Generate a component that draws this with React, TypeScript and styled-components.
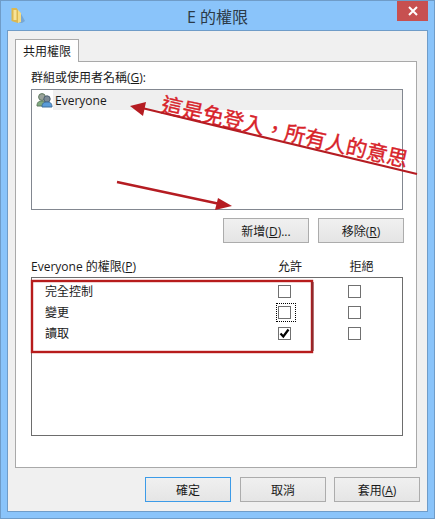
import styled, { createGlobalStyle } from 'styled-components';

const CJK = `"Noto Sans CJK TC", "Noto Sans", sans-serif`;

const Global = createGlobalStyle`
  html, body { margin: 0; padding: 0; background: #8ac4fa; }
  * { box-sizing: border-box; }
`;

const Win = styled.div`
  position: relative;
  width: 435px;
  height: 519px;
  background: #8ac4fa;
  border: 1px solid #6f9cc8;
  font-family: "Open Sans", ${CJK};
  font-size: 12px;
  color: #1a1a1a;
  overflow: hidden;
`;
const TitleBar = styled.div`
  position: relative;
  height: 29px;
  display: flex;
  align-items: center;
  justify-content: center;
  font-size: 16px;
  color: #2b3a47;
`;
const TitleIcon = styled.svg`
  position: absolute;
  left: 10px;
  top: 6px;
`;
const CloseBtn = styled.div`
  position: absolute;
  right: 6px;
  top: 0;
  width: 31px;
  height: 20px;
  background: #c75050;
  display: flex;
  align-items: center;
  justify-content: center;
`;
const Client = styled.div`
  margin: 0 6px;
  width: 421px;
  height: 482px;
  background: #f0f0f0;
  border: 1px solid #6f9cc8;
  padding: 8px 9px 0 7px;
`;
const Tab = styled.div`
  width: 64px;
  height: 23px;
  background: #fff;
  border: 1px solid #a9a9a9;
  border-bottom: none;
  margin-bottom: -1px;
  position: relative;
  z-index: 1;
  display: flex;
  align-items: center;
  justify-content: center;
`;
const Panel = styled.div`
  width: 402px;
  height: 407px;
  background: #fff;
  border: 1px solid #a9a9a9;
  padding: 0 12px 0 15px;
  display: flex;
  flex-direction: column;
`;
const FieldLabel = styled.div`
  height: 27px;
  padding-top: 7px;
  line-height: 18px;
`;
const NameList = styled.div`
  width: 372px;
  height: 121px;
  border: 1px solid #828790;
`;
const NameRow = styled.div`
  height: 20px;
  background: #efefef;
  margin-left: 21px;
  display: flex;
  align-items: center;
  padding-left: 2px;
  position: relative;
`;
const UsersIcon = styled.svg`
  position: absolute;
  left: -17px;
  top: 2px;
`;
const ButtonRow = styled.div`
  display: flex;
  justify-content: flex-end;
  gap: 9px;
  margin-top: 8px;
  height: 25px;
`;
const Btn = styled.div<{ $default?: boolean }>`
  width: 86px;
  height: 25px;
  margin-right: ${(p) => (p.$default ? 1 : 0)}px;
  border: 1px solid ${(p) => (p.$default ? '#3c9be8' : '#acacac')};
  background: linear-gradient(#f0f0f0, #e5e5e5);
  display: flex;
  align-items: center;
  justify-content: center;
`;
const PermHeader = styled.div`
  display: grid;
  grid-template-columns: 229px 60px 83px;
  margin-top: 15px;
  height: 19px;
  line-height: 18px;
`;
const ColHead = styled.div`
  text-align: center;
`;
const PermList = styled.div`
  width: 372px;
  height: 159px;
  border: 1px solid #6d6d6d;
  padding-top: 3px;
`;
const PermRow = styled.div`
  display: grid;
  grid-template-columns: 231px 70px 20px;
  height: 21px;
  align-items: center;
  padding-left: 13px;
`;
const PermName = styled.div`
  line-height: 18px;
`;
const Focus = styled.div<{ $on?: boolean }>`
  width: 20px;
  padding: 3px 5px 3px 2px;
  outline: ${(p) => (p.$on ? '1px dotted #000' : 'none')};
  outline-offset: -1px;
  display: flex;
`;
const Box = styled.div`
  width: 13px;
  height: 13px;
  border: 1px solid #707070;
  background: #fff;
  display: flex;
  align-items: center;
  justify-content: center;
`;
const Footer = styled.div`
  display: flex;
  justify-content: flex-end;
  margin: 9px -2px 0 0;
  gap: 8px;
`;
const Overlay = styled.svg`
  position: absolute;
  left: -1px;
  top: -1px;
  pointer-events: none;
`;
const Note = styled.div`
  position: absolute;
  left: 164px;
  top: 90px;
  transform-origin: 0 0;
  transform: rotate(12.8deg);
  font-size: 21px;
  font-weight: 400;
  -webkit-text-stroke: 0.4px #d8232a;
  white-space: nowrap;
  color: #d8232a;
  line-height: 24px;
  font-family: ${CJK};
`;

const perms = [
  { name: '完全控制' },
  { name: '變更', focus: true },
  { name: '讀取', checked: true },
];

export default function App() {
  return (
    <Win lang="zh-TW">
      <Global />
      <TitleBar>
        <TitleIcon width="16" height="17" viewBox="0 0 16 17">
          <path d="M9 5l5 9-3 2H8z" fill="#6f9bc4" opacity="0.7" />
          <path d="M0.5 1h5l1.5 2v13l-6.5-2z" fill="#dcb84f" />
          <path d="M7 3l3 3v9l-3 1z" fill="#f4dc86" />
          <path d="M2.5 3h3v10h-3z" fill="#f6e39a" />
        </TitleIcon>
        E 的權限
        <CloseBtn>
          <svg width="10" height="10" viewBox="0 0 10 10">
            <path d="M1 1l8 8M9 1l-8 8" stroke="#fff" strokeWidth="2" />
          </svg>
        </CloseBtn>
      </TitleBar>
      <Client>
        <Tab>共用權限</Tab>
        <Panel>
          <FieldLabel>
            群組或使用者名稱(<u>G</u>):
          </FieldLabel>
          <NameList>
            <NameRow>
              <UsersIcon width="17" height="17" viewBox="0 0 17 17">
                <circle cx="6" cy="5" r="3.4" fill="#9aa39a" stroke="#5f7a60" />
                <path d="M1 14c0-4 2-5 5-5s4 1 4 5z" fill="#7fa97f" stroke="#5f7a60" />
                <circle cx="11" cy="7" r="3.2" fill="#7d8b96" stroke="#4d6072" />
                <path d="M6 15c0-4 2-5 5-5s5 1 5 5z" fill="#5a9bd8" stroke="#3f6e9c" />
              </UsersIcon>
              Everyone
            </NameRow>
          </NameList>
          <ButtonRow>
            <Btn>
              <span>
                新增(<u>D</u>)...
              </span>
            </Btn>
            <Btn>
              <span>
                移除(<u>R</u>)
              </span>
            </Btn>
          </ButtonRow>
          <PermHeader>
            <div>
              Everyone 的權限(<u>P</u>)
            </div>
            <ColHead>允許</ColHead>
            <ColHead>拒絕</ColHead>
          </PermHeader>
          <PermList>
            {perms.map((p) => (
              <PermRow key={p.name}>
                <PermName>{p.name}</PermName>
                <Focus $on={p.focus}>
                  <Box>
                    {p.checked && (
                      <svg width="11" height="11" viewBox="0 0 11 11">
                        <path d="M1.5 5.5l2.8 3L9.5 1.5" fill="none" stroke="#000" strokeWidth="2.2" />
                      </svg>
                    )}
                  </Box>
                </Focus>
                <Focus>
                  <Box />
                </Focus>
              </PermRow>
            ))}
          </PermList>
        </Panel>
        <Footer>
          <Btn $default>確定</Btn>
          <Btn>取消</Btn>
          <Btn>
            <span>
              套用(<u>A</u>)
            </span>
          </Btn>
        </Footer>
      </Client>
      <Note>這是免登入，所有人的意思</Note>
      <Overlay width="435" height="519" viewBox="0 0 435 519">
        <rect x="32" y="281" width="280" height="71" fill="none" stroke="#b71c1c" strokeWidth="2.4" />
        <path d="M312.6 282v69" stroke="#8f2a2e" strokeWidth="2" />
        <path d="M417 174L142 108" stroke="#b51c22" strokeWidth="2.2" />
        <path d="M130 106l16-4-3 14z" fill="#b51c22" />
        <path d="M117 182L220 204" stroke="#b51c22" strokeWidth="2.4" />
        <path d="M232 206l-14-8-3 12z" fill="#b51c22" />
      </Overlay>
    </Win>
  );
}
